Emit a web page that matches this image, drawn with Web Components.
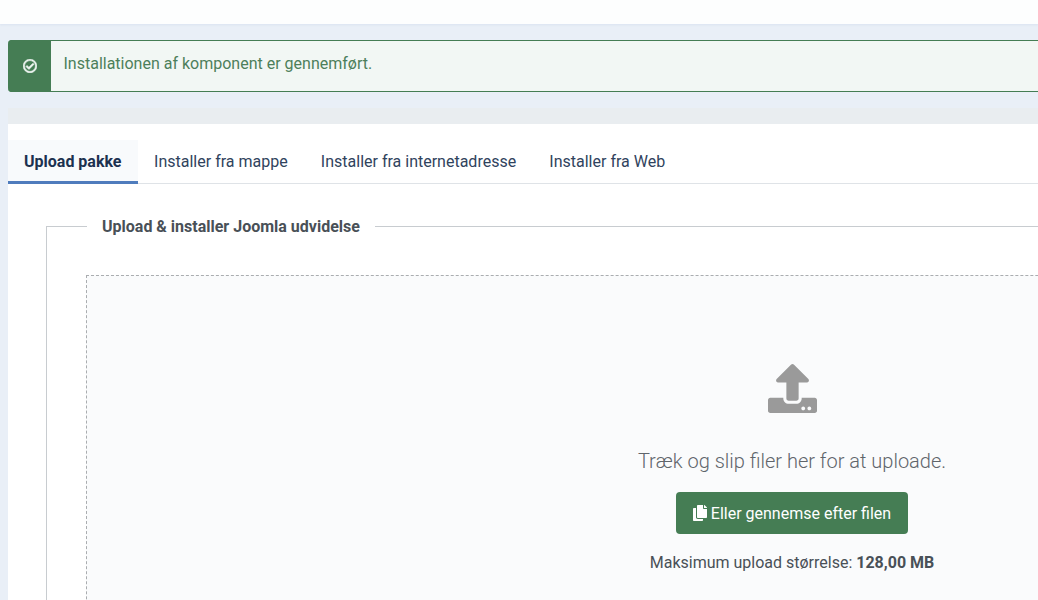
<!DOCTYPE html>
<html lang="da">
<head>
<meta charset="utf-8">
<title>Installer udvidelser</title>
<style>
  html, body { margin: 0; height: 600px; overflow: hidden; }
  body {
    background: #e9eff7;
    font-family: Roboto, "Liberation Sans", sans-serif;
    font-size: 16px;
    color: #495057;
  }
  .page { width: 1567px; padding: 16px 0 0 8px; }
</style>
</head>
<body>
<top-bar></top-bar>
<div class="page">
  <success-alert>Installationen af komponent er gennemført.</success-alert>
  <install-card>
    <tab-item active>Upload pakke</tab-item>
    <tab-item>Installer fra mappe</tab-item>
    <tab-item>Installer fra internetadresse</tab-item>
    <tab-item>Installer fra Web</tab-item>
    <upload-panel slot="panel" legend="Upload &amp; installer Joomla udvidelse">
      <upload-zone size="128,00 MB"></upload-zone>
    </upload-panel>
  </install-card>
</div>

<script>
class TopBar extends HTMLElement {
  constructor() {
    super();
    this.attachShadow({ mode: 'open' });
    this.shadowRoot.innerHTML = `
    <style>
      :host {
        display: block;
        height: 24px;
        background: #fdfefe;
        box-shadow: 0 1px 2px rgba(190, 205, 225, .35);
      }
    </style>`;
  }
}

class SuccessAlert extends HTMLElement {
  constructor() {
    super();
    this.attachShadow({ mode: 'open' });
    this.shadowRoot.innerHTML = `
    <style>
      :host {
        display: flex;
        height: 52px;
        box-sizing: border-box;
        background: #f2f7f4;
        border: 1px solid #457d54;
        border-left: 0;
        border-radius: 4px 0 0 4px;
        color: #4d7f5b;
        line-height: 22px;
      }
      .icon {
        flex: 0 0 43px;
        margin: -1px 0;
        display: flex;
        align-items: center;
        justify-content: center;
        background: #457d54;
        border-radius: 4px 0 0 4px;
      }
      svg { width: 14px; height: 14px; fill: #f2f7f4; stroke: #f2f7f4; stroke-width: 24; }
      .text { padding: 12px 12.5px; }
    </style>
    <div class="icon">
      <svg viewBox="0 0 512 512"><path d="M256 8C119.033 8 8 119.033 8 256s111.033 248 248 248 248-111.033 248-248S392.967 8 256 8zm0 48c110.532 0 200 89.451 200 200 0 110.532-89.451 200-200 200-110.532 0-200-89.451-200-200 0-110.532 89.451-200 200-200m140.204 130.267l-22.536-22.718c-4.667-4.705-12.265-4.736-16.97-.068L215.346 303.697l-59.792-60.277c-4.667-4.705-12.265-4.736-16.97-.069l-22.719 22.536c-4.705 4.667-4.736 12.265-.068 16.971l90.781 91.516c4.667 4.705 12.265 4.736 16.97.068l172.589-171.204c4.704-4.668 4.734-12.266.067-16.971z"/></svg>
    </div>
    <div class="text"><slot></slot></div>`;
  }
}

class InstallCard extends HTMLElement {
  constructor() {
    super();
    this.attachShadow({ mode: 'open' });
    this.shadowRoot.innerHTML = `
    <style>
      :host {
        display: block;
        margin-top: 16px;
        background: #fff;
        border-top: 16px solid #e9edf0;
      }
      .tabs {
        display: flex;
        padding-top: 16px;
        border-bottom: 1px solid #dfe3e7;
      }
      .panel { padding: 33px 38px 0; }
    </style>
    <div class="tabs"><slot></slot></div>
    <div class="panel"><slot name="panel"></slot></div>`;
  }
}

class TabItem extends HTMLElement {
  constructor() {
    super();
    this.attachShadow({ mode: 'open' });
    this.shadowRoot.innerHTML = `
    <style>
      :host {
        display: block;
        height: 44px;
        margin-bottom: -1px;
        box-sizing: border-box;
        padding: 0 16.6px;
        line-height: 43px;
        color: #30435d;
      }
      :host([active]) {
        background: #f8fafc;
        border-bottom: 3px solid #4f7cbd;
        color: #1c3150;
        font-weight: 700;
        padding: 0 16px;
      }
    </style>
    <slot></slot>`;
  }
}

class UploadPanel extends HTMLElement {
  constructor() {
    super();
    this.attachShadow({ mode: 'open' });
    this.shadowRoot.innerHTML = `
    <style>
      :host { display: block; }
      fieldset {
        margin: 0;
        padding: 39px 39px 40px;
        border: 0;
        border-top: 1px solid #c8ccd0;
        border-left: 1px solid #c8ccd0;
        min-width: 0;
      }
      legend {
        margin-left: 1px;
        padding: 0 15px;
        font-weight: 700;
        line-height: 19px;
        color: #495057;
      }
    </style>
    <fieldset>
      <legend></legend>
      <slot></slot>
    </fieldset>`;
    this.shadowRoot.querySelector('legend').textContent = this.getAttribute('legend');
  }
}

class UploadZone extends HTMLElement {
  constructor() {
    super();
    this.attachShadow({ mode: 'open' });
    this.shadowRoot.innerHTML = `
    <style>
      :host {
        display: flex;
        flex-direction: column;
        align-items: center;
        height: 400px;
        padding-top: 88px;
        background: #fafbfc;
        border: 1px dashed #aaadb0;
      }
      .upload { width: 49px; height: 49px; fill: #9a9a9a; display: block; }
      .hint {
        margin-top: 36px;
        font-size: 20px;
        font-weight: 300;
        line-height: 24px;
        color: #5f656b;
      }
      button {
        display: flex;
        align-items: center;
        gap: 4px;
        margin-top: 19px;
        height: 42px;
        padding: 0 16.5px;
        border: 0;
        border-radius: 4px;
        background: #457d54;
        color: #fff;
        font: 16px Roboto, "Liberation Sans", sans-serif;
      }
      button svg { width: 14px; height: 16px; fill: #fff; }
      .max { margin-top: 19px; line-height: 20px; color: #495057; }
      b { font-weight: 700; }
    </style>
    <svg class="upload" viewBox="0 0 512 512"><path d="M296 384h-80c-13.3 0-24-10.7-24-24V192h-87.7c-17.8 0-26.7-21.5-14.1-34.1L242.3 5.7c7.5-7.5 19.8-7.5 27.3 0l152.2 152.2c12.6 12.6 3.7 34.1-14.1 34.1H320v168c0 13.3-10.7 24-24 24zm216-8v112c0 13.3-10.7 24-24 24H24c-13.3 0-24-10.7-24-24V376c0-13.3 10.7-24 24-24h136v8c0 30.9 25.1 56 56 56h80c30.9 0 56-25.1 56-56v-8h136c13.3 0 24 10.7 24 24zm-124 88c0-11-9-20-20-20s-20 9-20 20 9 20 20 20 20-9 20-20zm64 0c0-11-9-20-20-20s-20 9-20 20 9 20 20 20 20-9 20-20z"/></svg>
    <div class="hint">Træk og slip filer her for at uploade.</div>
    <button type="button">
      <svg viewBox="0 0 448 512"><path d="M320 448v40c0 13.255-10.745 24-24 24H24c-13.255 0-24-10.745-24-24V120c0-13.255 10.745-24 24-24h72v296c0 30.879 25.121 56 56 56h168zm0-344V0H152c-13.255 0-24 10.745-24 24v368c0 13.255 10.745 24 24 24h272c13.255 0 24-10.745 24-24V128H344c-13.2 0-24-10.8-24-24zm120.971-31.029L375.029 7.029A24 24 0 0 0 358.059 0H352v96h96v-6.059a24 24 0 0 0-7.029-16.97z"/></svg>
      Eller gennemse efter filen
    </button>
    <div class="max">Maksimum upload størrelse: <b></b></div>`;
    this.shadowRoot.querySelector('b').textContent = this.getAttribute('size');
  }
}

customElements.define('top-bar', TopBar);
customElements.define('success-alert', SuccessAlert);
customElements.define('install-card', InstallCard);
customElements.define('tab-item', TabItem);
customElements.define('upload-panel', UploadPanel);
customElements.define('upload-zone', UploadZone);
</script>
</body>
</html>
